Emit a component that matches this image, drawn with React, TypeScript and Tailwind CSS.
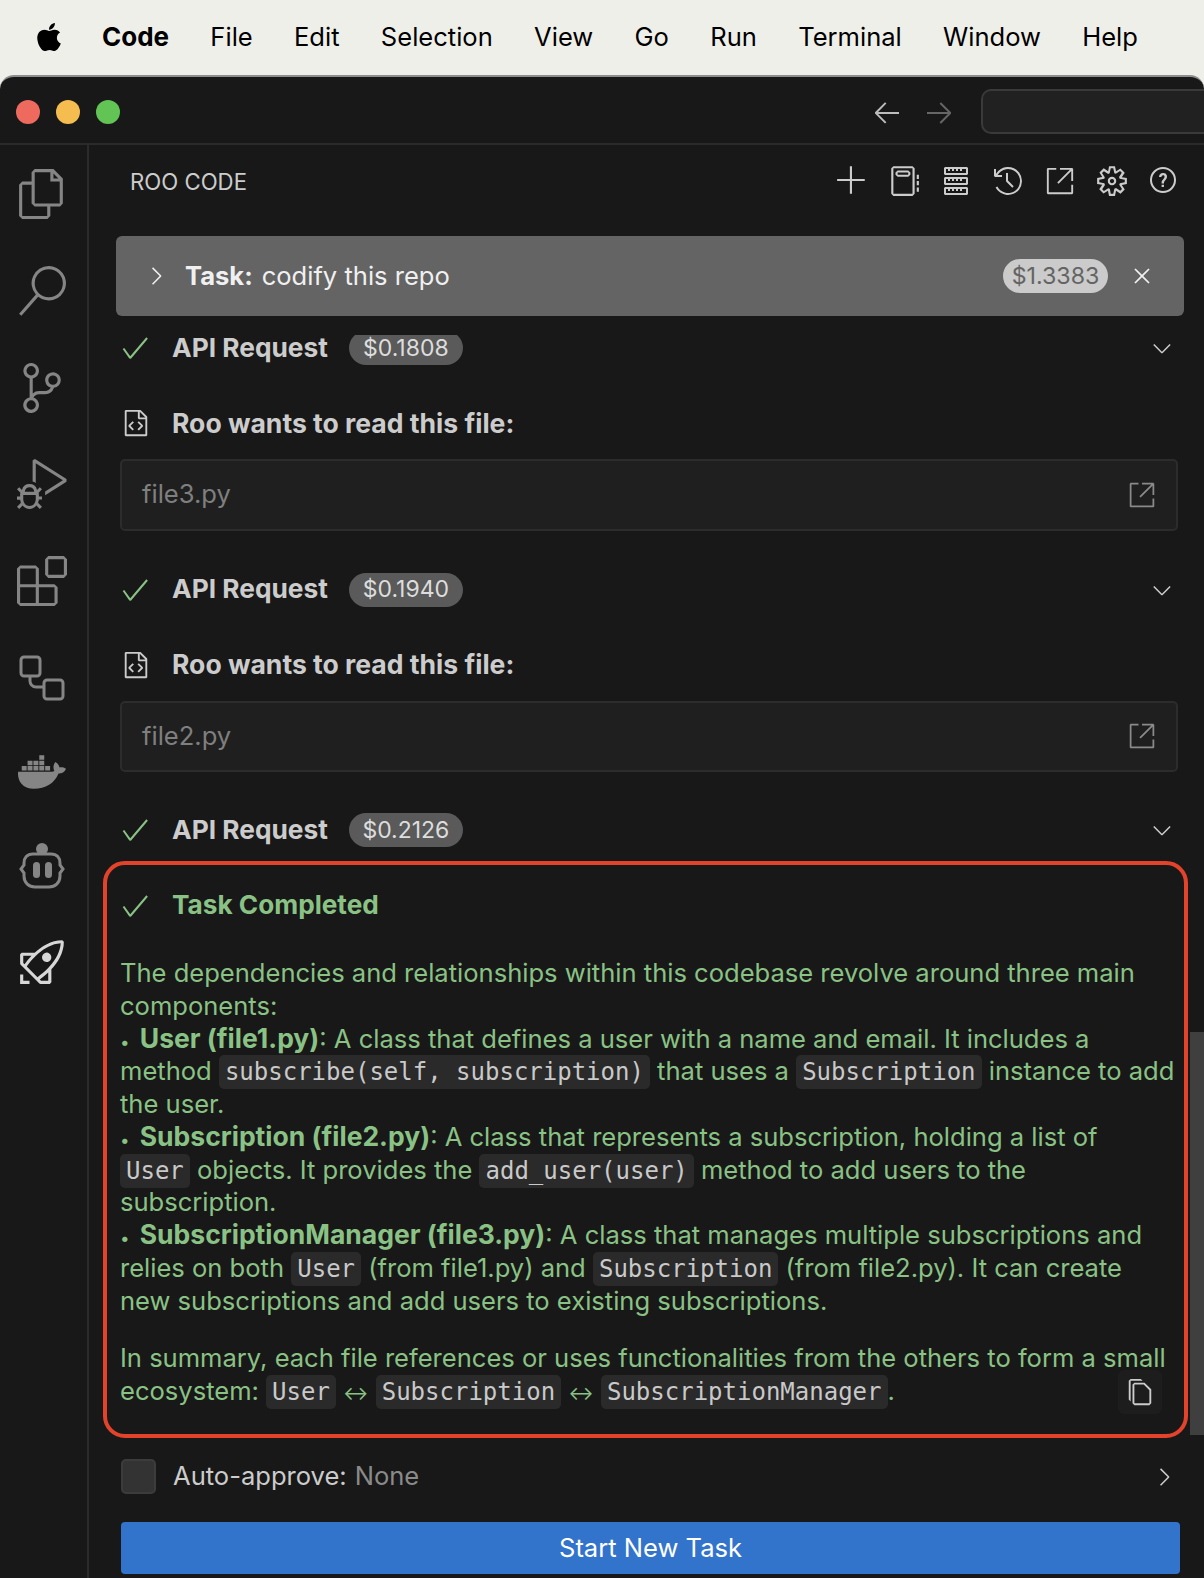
import { FaApple, FaDocker } from "react-icons/fa";
import {
  VscAdd,
  VscArrowLeft,
  VscArrowRight,
  VscCheck,
  VscChevronDown,
  VscChevronRight,
  VscClose,
  VscCopy,
  VscDebugAlt,
  VscExtensions,
  VscFileCode,
  VscFiles,
  VscGear,
  VscHistory,
  VscLinkExternal,
  VscNotebook,
  VscQuestion,
  VscRocket,
  VscSearch,
  VscServer,
  VscSourceControl,
} from "react-icons/vsc";

const menus = ["File", "Edit", "Selection", "View", "Go", "Run", "Terminal", "Window", "Help"];

function FlowIcon() {
  return (
    <svg width="48" height="48" viewBox="0 0 48 48" fill="none" stroke="#858585" strokeWidth="3">
      <rect x="3" y="3" width="19" height="19" rx="3" />
      <rect x="26" y="26" width="19" height="19" rx="3" />
      <path d="M12 22v5a6 6 0 0 0 6 6h8" />
    </svg>
  );
}

function RobotIcon() {
  return (
    <svg width="48" height="52" viewBox="0 0 48 52" fill="none">
      <circle cx="24" cy="8" r="6" fill="#858585" />
      <path
        d="M15 13h18c6 0 9 4 9 9v2l3 4-3 4v3c0 7-5 11-11 11H17c-6 0-11-4-11-11v-3l-3-4 3-4v-2c0-5 3-9 9-9z"
        stroke="#858585"
        strokeWidth="3"
      />
      <rect x="15" y="21" width="7" height="16" rx="3.5" fill="#858585" />
      <rect x="27" y="21" width="7" height="16" rx="3.5" fill="#858585" />
    </svg>
  );
}

function Code({ children }: { children: string }) {
  return (
    <code className="rounded-[5px] bg-[#2a2a2a] px-[6px] py-[3px] text-[24px] leading-none text-[#c9c9c9] [font-family:'DejaVu_Sans_Mono',monospace]">
      {children}
    </code>
  );
}

function Bullet({ children }: { children: string }) {
  return (
    <>
      <span className="mr-[3px] text-[17px] leading-none">•</span>{" "}
      <b className="text-[26.5px] leading-none">{children}</b>
    </>
  );
}

function Arrow() {
  return <span className="text-[19px] leading-none">↔</span>;
}

function ApiRow({ cost, className }: { cost: string; className: string }) {
  return (
    <div className={`flex h-[40px] items-center pr-[28px] pl-[32px] ${className}`}>
      <VscCheck size={32} className="-ml-[2px] text-[#8ac285]" />
      <span className="ml-[21px] text-[26.3px] font-bold text-[#cccccc]">API Request</span>
      <span className="ml-[21px] flex h-[34px] w-[114px] items-center justify-center rounded-full bg-[#5a5a5a] text-[23px] text-[#dddddd]">
        {cost}
      </span>
      <VscChevronDown size={28} className="ml-auto text-[#cccccc]" />
    </div>
  );
}

function ReadRow({ file, top }: { file: string; top: string }) {
  return (
    <>
      <div className={`flex h-[40px] items-center pl-[32px] ${top}`}>
        <VscFileCode size={30} className="text-[#cccccc]" />
        <span className="ml-[21px] text-[26.55px] font-bold text-[#cccccc]">Roo wants to read this file:</span>
      </div>
      <div className="mt-[16px] mr-[26px] ml-[31px] flex h-[71.5px] items-center rounded-[5px] border-2 border-[#2c2c2c] bg-[#1f1f1f] pr-[20px] pl-[20px] text-[#7f7f7f]">
        {file}
        <VscLinkExternal size={28} className="ml-auto text-[#8a8a8a]" />
      </div>
    </>
  );
}

export default function App() {
  return (
    <div className="flex h-[1578px] w-[1204px] flex-col overflow-hidden bg-[#efefea] text-[25.55px] leading-[32.75px] [font-family:Inter,sans-serif]">
      {/* Menu bar */}
      <div className="flex h-[75px] shrink-0 items-center pl-[33px] text-black">
        <FaApple size={32} className="-mt-[2px]" />
        <span className="ml-[37px] text-[26px] font-bold">Code</span>
        {menus.map((m) => (
          <span key={m} className="ml-[41.3px]">
            {m}
          </span>
        ))}
      </div>

      <div className="flex min-h-0 flex-1 flex-col rounded-t-[14px] border-t-2 border-[#8d8d8d] bg-[#181818]">
        {/* Title bar */}
        <div className="flex h-[68px] shrink-0 items-center border-b-2 border-[#2b2b2b] pt-[3px] pl-[16px]">
          <span className="h-[24px] w-[24px] rounded-full bg-[#ee6a5f]" />
          <span className="ml-[15.5px] h-[24px] w-[24px] rounded-full bg-[#f5bd4f]" />
          <span className="ml-[16px] h-[24px] w-[24px] rounded-full bg-[#61c454]" />
          <VscArrowLeft size={32} className="ml-[751px] text-[#bcbcbc]" />
          <VscArrowRight size={32} className="ml-[20px] text-[#666666]" />
          <div className="ml-[26px] h-[45px] flex-1 rounded-l-[10px] border-2 border-r-0 border-[#3a3a3a] bg-[#212121]" />
        </div>

        <div className="flex min-h-0 flex-1">
          {/* Activity bar */}
          <div className="flex w-[89px] shrink-0 flex-col items-center border-r-2 border-[#2b2b2b] pt-[1px] pr-[4px] text-[#858585]">
            <div className="flex h-[96.7px] items-center"><VscFiles size={50} /></div>
            <div className="flex h-[96.7px] items-center"><VscSearch size={50} /></div>
            <div className="flex h-[96.7px] items-center"><VscSourceControl size={50} /></div>
            <div className="flex h-[96.7px] items-center"><VscDebugAlt size={50} /></div>
            <div className="flex h-[96.7px] items-center"><VscExtensions size={50} /></div>
            <div className="flex h-[96.7px] items-center"><FlowIcon /></div>
            <div className="flex h-[96.7px] -translate-y-[2px] items-center"><FaDocker size={48} /></div>
            <div className="flex h-[96.7px] -translate-y-[4px] items-center"><RobotIcon /></div>
            <div className="flex h-[96.7px] -translate-y-[6px] items-center text-[#d7d7d7]"><VscRocket size={50} /></div>
          </div>

          {/* Side panel */}
          <div className="relative flex min-w-0 flex-1 flex-col">
            <div className="flex h-[91px] shrink-0 items-center pr-[14px] pb-[20px] pl-[41px] text-[#cccccc]">
              <span className="mr-auto pt-[3px] text-[22.2px]">ROO CODE</span>
              <span className="flex w-[52px] justify-center"><VscAdd size={34} /></span>
              <span className="flex w-[52px] justify-center"><VscNotebook size={34} /></span>
              <span className="flex w-[52px] justify-center"><VscServer size={32} /></span>
              <span className="flex w-[52px] justify-center"><VscHistory size={32} /></span>
              <span className="flex w-[52px] justify-center"><VscLinkExternal size={30} /></span>
              <span className="flex w-[52px] justify-center"><VscGear size={34} /></span>
              <span className="flex w-[52px] justify-center"><VscQuestion size={32} /></span>
            </div>

            <div className="mr-[20px] ml-[27px] flex h-[80px] shrink-0 items-center rounded-[6px] bg-[#646464] pr-[28px] pl-[26px] text-[#f0f0f0]">
              <VscChevronRight size={28} />
              <span className="ml-[15px] font-bold">Task:</span>
              <span className="ml-[9px]">codify this repo</span>
              <span className="mr-[20px] ml-auto flex h-[34px] w-[105px] items-center justify-center rounded-full bg-[#cbcbcb] text-[23.2px] text-[#646464]">
                $1.3383
              </span>
              <VscClose size={28} />
            </div>

            {/* Chat */}
            <div className="mt-[19px] h-[1103px] shrink-0 overflow-hidden">
              <ApiRow cost="$0.1808" className="-mt-[7px]" />
              <ReadRow file="file3.py" top="mt-[35px]" />
              <ApiRow cost="$0.1940" className="mt-[39px]" />
              <ReadRow file="file2.py" top="mt-[35px]" />
              <ApiRow cost="$0.2126" className="mt-[38px]" />

              <div className="relative mt-[11px] mr-[16px] ml-[14px] h-[577px] rounded-[22px] border-4 border-[#e4432b] pr-[3px] pl-[13px] text-[#8ac285]">
                <div className="flex h-[78px] items-center pt-[3px]">
                  <VscCheck size={32} className="-ml-[1px]" />
                  <span className="ml-[21px] text-[26.2px] font-bold">Task Completed</span>
                </div>
                <p className="mt-[14px]">
                  The dependencies and relationships within this codebase revolve around three main components:
                  <br />
                  <Bullet>User (file1.py)</Bullet>: A class that defines a user with a name and email. It includes a
                  <br />
                  method <Code>subscribe(self, subscription)</Code> that uses a <Code>Subscription</Code> instance to add
                  the user.
                  <br />
                  <Bullet>Subscription (file2.py)</Bullet>: A class that represents a subscription, holding a list of
                  <br />
                  <Code>User</Code> objects. It provides the <Code>add_user(user)</Code> method to add users to the
                  <br />
                  subscription.
                  <br />
                  <Bullet>SubscriptionManager (file3.py)</Bullet>: A class that manages multiple subscriptions and
                  <br />
                  relies on both <Code>User</Code> (from file1.py) and <Code>Subscription</Code> (from file2.py). It can
                  create
                  <br />
                  new subscriptions and add users to existing subscriptions.
                </p>
                <p className="mt-[24.6px]">
                  In summary, each file references or uses functionalities from the others to form a small ecosystem:{" "}
                  <Code>User</Code> <Arrow /> <Code>Subscription</Code> <Arrow /> <Code>SubscriptionManager</Code>.
                </p>
                <span className="absolute right-[22px] bottom-[20px] flex h-[44px] w-[44px] items-center justify-center rounded-[6px] bg-[#1d1d1d] text-[#cccccc]">
                  <VscCopy size={30} />
                </span>
              </div>
            </div>

            {/* Footer */}
            <div className="mt-[21px] mr-[26px] ml-[32px] flex h-[35px] shrink-0 items-center">
              <span className="h-[35px] w-[35px] rounded-[5px] border-2 border-[#3c3c3c] bg-[#333333]" />
              <span className="ml-[17px] text-[#cccccc]">Auto-approve:</span>
              <span className="ml-[8px] text-[#8a8a8a]">None</span>
              <VscChevronRight size={28} className="ml-auto text-[#cccccc]" />
            </div>
            <div className="mt-[28px] mr-[24px] ml-[32px] flex h-[52px] shrink-0 items-center justify-center rounded-[4px] bg-[#3273cc] text-white">
              Start New Task
            </div>

            {/* Scrollbar thumb */}
            <div className="absolute top-[887px] right-0 h-[403px] w-[14px] bg-[#3f3f3f]" />
          </div>
        </div>
      </div>
    </div>
  );
}
